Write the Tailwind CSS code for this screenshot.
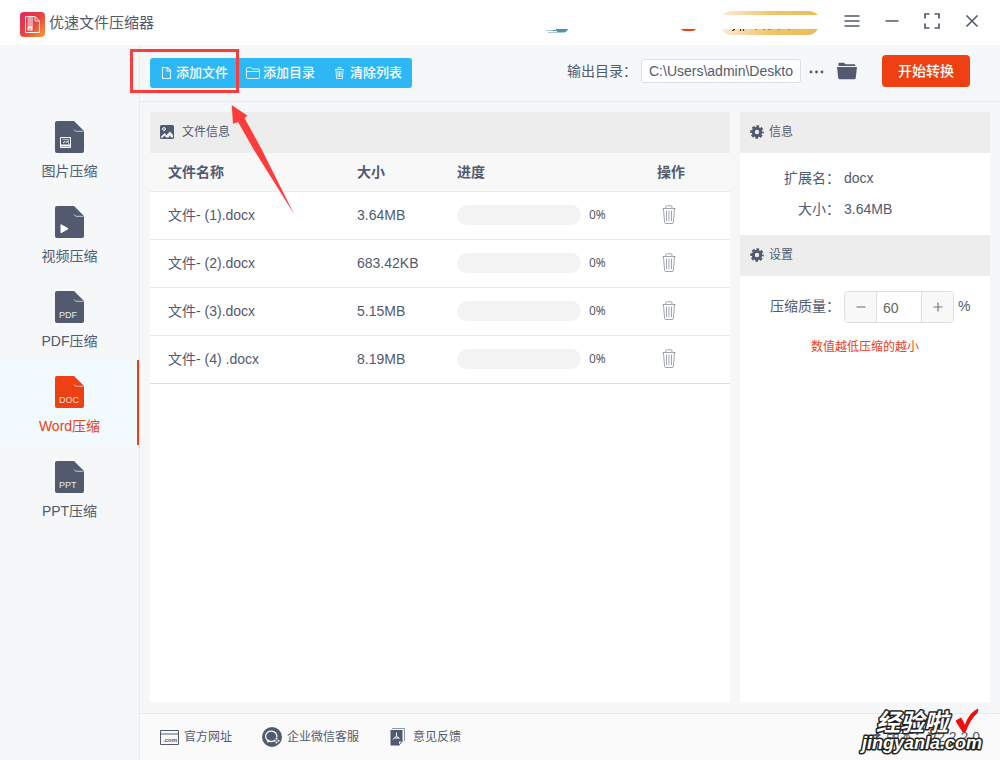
<!DOCTYPE html>
<html lang="zh-CN">
<head>
<meta charset="utf-8">
<meta name="viewport" content="width=device-width, initial-scale=1">
<title>优速文件压缩器</title>
<script src="https://cdn.jsdelivr.net/npm/@tailwindcss/browser@4"></script>
</head>
<body class="relative flex min-h-screen flex-col bg-[#f5f7f9] font-['Liberation_Sans','Noto_Sans_CJK_SC',sans-serif] text-sm text-[#515a6e]">
<svg class="hidden" aria-hidden="true">
  <symbol id="sheet" viewBox="0 0 29 32">
    <path d="M2 0H19L29 10V30Q29 32 27 32H2Q0 32 0 30V2Q0 0 2 0Z" fill="currentColor"/>
    <path d="M19 8.500Q20 10.300 21.500 10.300H28.500" fill="none" stroke="#fff" stroke-opacity=".75" stroke-width=".9"/>
  </symbol>
  <symbol id="bin" viewBox="0 0 14 20">
    <g fill="none" stroke="currentColor">
      <path d="M.5 3.500H13.500M4 3.500V2Q4 .7 5.300 .7H8.700Q10 .7 10 2V3.500"/>
      <path d="M1.500 4L2.600 17.200Q2.700 18.500 4 18.500H10Q11.300 18.500 11.400 17.200L12.500 4"/>
      <path d="M4.500 5.500V16M7 5.500V16M9.500 5.500V16"/>
    </g>
  </symbol>
  <symbol id="gear" viewBox="0 0 14 14">
    <g fill="none" stroke="currentColor">
      <circle cx="7" cy="7" r="3.700" stroke-width="3"/>
      <circle cx="7" cy="7" r="5.700" stroke-width="2.200" stroke-dasharray="2.700 1.777" stroke-dashoffset="1.350"/>
    </g>
  </symbol>
</svg>

<header class="relative flex h-[45px] shrink-0 items-center bg-[#fefefe] pl-5 pr-5">
  <svg class="mt-1 size-[25px]" viewBox="0 0 25 25" aria-hidden="true">
    <defs><linearGradient id="brand" x1="0" y1="0" x2="1" y2="1"><stop offset="0" stop-color="#e6265f"/><stop offset=".5" stop-color="#ea4040"/><stop offset="1" stop-color="#f5a03c"/></linearGradient></defs>
    <rect width="25" height="25" rx="4" fill="url(#brand)"/>
    <path d="M5.500 4.500H15L19.500 9V20.500H5.500ZM15 4.500V9H19.500" fill="none" stroke="#fff" stroke-opacity=".9"/>
    <path d="M7.500 6H13M7.500 8H13M7.500 10H13M7.500 12H13M7.500 14H13" stroke="#fff" stroke-width="1.200"/>
    <rect x="7.500" y="14.500" width="5" height="4" fill="#fff"/><path d="M9 17H11" stroke="#ea4a45"/>
  </svg>
  <h1 class="ml-1 text-[15px]">优速文件压缩器</h1>
  <svg class="absolute right-[180px] top-[11px] h-6 w-[276px]" viewBox="544 11 276 24" aria-hidden="true">
    <defs>
      <linearGradient id="gold"><stop offset="0" stop-color="#faecd2"/><stop offset=".5" stop-color="#f0c56c"/><stop offset="1" stop-color="#edbb5b"/></linearGradient>
    </defs>
    <path d="M546 30.500H555M548 32.500H565" stroke="#a9cdd0"/><path d="M556 29.500H568M553 30.500H567M557 31.500H566" stroke="#5297a0"/>
    <path d="M681 29H696Q695 31 692 31H685Q682 31 681 29Z" fill="#ee4013"/>
    <path d="M722.500 15Q726 11 732 11H808Q814 11 818 15ZM722 29H818Q814 35 808 35H732Q725 35 722 29Z" fill="url(#gold)"/>
    <path d="M733 29.500H735M740.500 29V31M743.500 29V31M732 30.500H734" stroke="#613a21" stroke-width="1.200"/>
    <path d="M755 29.500H757M763 29.500H765M768 29.500H771M778 29.500H780M788 29.500H790" stroke="#b98b42"/>
  </svg>
  <div class="ml-auto flex items-center gap-6 pb-1">
    <button aria-label="菜单"><svg class="size-4" viewBox="0 0 16 16"><path d="M.5 3H15.500M.5 8H15.500M.5 13H15.500" stroke="#515a6e" stroke-width="1.400"/></svg></button>
    <button aria-label="最小化"><svg class="size-4" viewBox="0 0 16 16"><path d="M1.500 8H14.500" stroke="#515a6e" stroke-width="1.500"/></svg></button>
    <button aria-label="最大化"><svg class="size-4" viewBox="0 0 16 16"><path d="M1 5.500V1H5.500M10.500 1H15V5.500M15 10.500V15H10.500M5.500 15H1V10.500" fill="none" stroke="#515a6e" stroke-width="1.700"/></svg></button>
    <button aria-label="关闭"><svg class="size-4" viewBox="0 0 16 16"><path d="M2.500 2.500L13.500 13.500M13.500 2.500L2.500 13.500" stroke="#515a6e" stroke-width="1.600"/></svg></button>
  </div>
</header>

<div class="flex flex-1">
  <nav class="w-[140px] shrink-0 border-r border-[#e8eaec] pt-[60px]">
    <a href="#image" class="flex h-[85px] flex-col items-center pt-4 leading-5">
      <svg class="mb-2 h-8 w-[29px]" viewBox="0 0 29 32"><use href="#sheet"/><path d="M5.500 16.500H15.500V26.500H5.500Z" fill="#515a6e" stroke="#fff"/><path d="M6 24.500H15" stroke="#fff" stroke-width="2"/><path d="M7.500 18.500H13.500V23.500" fill="none" stroke="#fff" stroke-opacity=".6"/><path d="M8 22L10 20.500L11 21.500L13 20" stroke="#fff" fill="none"/></svg>图片压缩</a>
    <a href="#video" class="flex h-[85px] flex-col items-center pt-4 leading-5">
      <svg class="mb-2 h-8 w-[29px]" viewBox="0 0 29 32"><use href="#sheet"/><path d="M5.500 19Q5.500 18 6.500 18.500L12.800 22Q13.500 22.700 12.800 23.300L6.500 26.900Q5.500 27.300 5.500 26.300Z" fill="#fff"/></svg>视频压缩</a>
    <a href="#pdf" class="flex h-[85px] flex-col items-center pt-4 leading-5">
      <svg class="mb-2 h-8 w-[29px]" viewBox="0 0 29 32"><use href="#sheet"/><text x="4" y="27" font-size="9" fill="#e8eaec" font-family="Liberation Sans">PDF</text></svg>PDF压缩</a>
    <a href="#word" aria-current="page" class="flex h-[85px] flex-col items-center border-r-2 border-[#ee4013] bg-[#f0faff] pl-[2px] pt-4 leading-5 text-[#ee4013]">
      <svg class="mb-2 h-8 w-[29px]" viewBox="0 0 29 32"><use href="#sheet"/><text x="4" y="27" font-size="9" fill="#fde3dc" font-family="Liberation Sans">DOC</text></svg>Word压缩</a>
    <a href="#ppt" class="flex h-[85px] flex-col items-center pt-4 leading-5">
      <svg class="mb-2 h-8 w-[29px]" viewBox="0 0 29 32"><use href="#sheet"/><text x="4" y="27" font-size="9" fill="#e8eaec" font-family="Liberation Sans">PPT</text></svg>PPT压缩</a>
  </nav>

  <div class="flex min-w-0 flex-1 flex-col">
    <div class="flex h-[57px] items-center border-b border-[#e8eaec] pl-[10px] pr-[30px]">
      <div class="flex h-[30px] overflow-hidden rounded-[3px] bg-[#2db7f5] text-[13px] font-medium text-white">
        <button class="flex items-center gap-px px-[9px]"><svg class="size-4" viewBox="0 0 16 16" fill="none" stroke="#fff" stroke-opacity=".85" stroke-width="1.100"><path d="M3.500 2.500H8.500L11.500 5.500V13.500H3.500ZM8 2.500V6H11.500"/></svg>添加文件</button>
        <button class="flex items-center gap-px px-[9px]"><svg class="size-4" viewBox="0 0 16 16" fill="none" stroke="#fff" stroke-opacity=".85"><path d="M.5 12.500V3.500Q.5 2.500 1.500 2.500H5L6.500 4H12.500Q13.500 4 13.500 5V12.500Q13.500 13.500 12.500 13.500H1.500Q.5 13.500 .5 12.500ZM.5 6.500H13.500"/></svg>添加目录</button>
        <button class="flex items-center gap-px pl-[9px] pr-[10px]"><svg class="size-4" viewBox="0 0 16 16" fill="none" stroke="#fff" stroke-opacity=".8"><path d="M2 4.500H11M5 4.500V2.500H8V4.500M3 5L3.500 13.500H9.500L10 5M5 6V12M6.500 6V12M8 6V12"/></svg>清除列表</button>
      </div>
      <label for="outdir" class="ml-auto pb-1">输出目录：</label>
      <input id="outdir" value="C:\Users\admin\Deskto" class="mb-1 ml-1 h-6 w-40 rounded-[3px] border border-[#dcdee2] bg-white px-[7px] text-sm text-[#515a6e]">
      <button aria-label="浏览" class="ml-2"><svg class="mb-1 size-4" viewBox="0 0 16 16" fill="#515a6e"><circle cx="2" cy="9" r="1.400"/><circle cx="7.500" cy="9" r="1.400"/><circle cx="13" cy="9" r="1.400"/></svg></button>
      <button aria-label="打开目录" class="ml-3"><svg class="mb-1 h-[18px] w-5" viewBox="0 0 20 18"><path d="M1.500 4V1.500Q1.500 .7 2.300 .7H7L8.500 2.300H17.500Q18.300 2.300 18.300 3V4Z" fill="#515a6e"/><path d="M0 5H20L18.700 16Q18.500 17.300 17.200 17.300H2.800Q1.500 17.300 1.300 16Z" fill="#515a6e"/></svg></button>
      <button class="mb-1 ml-[25px] h-8 w-[88px] rounded-[4px] bg-[#ee4013] text-sm font-medium text-white">开始转换</button>
    </div>

    <main class="flex flex-1 gap-[10px] px-[10px] pb-[11px] pt-[10px]">
      <section class="min-w-0 flex-1 bg-white">
        <h2 class="flex h-[41px] items-center gap-2 bg-[#ededed] pb-[2px] pl-[10px] text-xs">
          <svg class="size-[14px]" viewBox="0 0 14 14"><rect width="14" height="14" rx="1.500" fill="#515a6e"/><path d="M1 11.500L4.500 8L6.500 10L10 6.500L13 10V12.500H11L10 10.500L8.500 12.500H6L4.500 10.500L2.500 12.800H1Z" fill="#ededed"/><circle cx="4" cy="4" r="1.400" fill="none" stroke="#fff"/></svg>文件信息</h2>
        <table class="w-full table-fixed border-collapse text-left">
          <colgroup><col><col class="w-[100px]"><col class="w-[200px]"><col class="w-[91px]"></colgroup>
          <thead class="bg-[#f8f8f9]"><tr class="h-[38px] border-b border-[#e8eaec] [&>th]:pl-[18px]"><th>文件名称</th><th>大小</th><th>进度</th><th>操作</th></tr></thead>
          <tbody id="files"></tbody>
        </table>
      </section>

      <aside class="w-[250px] shrink-0 bg-white">
        <h2 class="flex h-[41px] items-center gap-[5px] bg-[#ededed] pb-[2px] pl-[10px] text-xs"><svg class="size-[14px]"><use href="#gear"/></svg>信息</h2>
        <dl class="grid grid-cols-[100px_1fr] gap-x-1 py-[10px] leading-[31px]">
          <dt class="text-right">扩展名：</dt><dd>docx</dd>
          <dt class="text-right">大小：</dt><dd>3.64MB</dd>
        </dl>
        <h2 class="flex h-[41px] items-center gap-[5px] bg-[#ededed] pb-[2px] pl-[10px] text-xs"><svg class="size-[14px]"><use href="#gear"/></svg>设置</h2>
        <div class="flex items-center pt-[15px]">
          <label for="quality" class="w-[100px] pb-[2px] text-right">压缩质量：</label>
          <div class="ml-1 flex h-8 w-[110px] overflow-hidden rounded-[4px] border border-[#dcdee2]">
            <button aria-label="减少" class="flex w-[31px] items-center justify-center bg-[#f8f8f9]"><svg class="size-[10px]" viewBox="0 0 10 10"><path d="M.5 5H9.500" stroke="#9299a5" stroke-width="1.500"/></svg></button>
            <input id="quality" value="60" class="min-w-0 flex-1 border-x border-[#dcdee2] px-[6px] pt-[2px] text-sm text-[#666]">
            <button aria-label="增加" class="flex w-[31px] items-center justify-center bg-[#f8f8f9]"><svg class="size-[10px]" viewBox="0 0 10 10"><path d="M.5 5H9.500M5 .5V9.500" stroke="#717987" stroke-width="1.200"/></svg></button>
          </div>
          <span class="ml-1 pb-[2px]">%</span>
        </div>
        <p class="mt-4 text-center text-xs text-[#ee4013]">数值越低压缩的越小</p>
      </aside>
    </main>

    <footer class="relative flex h-[47px] items-center border-t border-[#e8eaec] bg-[#fafafa] pl-5 text-xs">
      <a href="#site" class="flex items-center gap-[5px]"><svg class="h-4 w-[19px]" viewBox="0 0 19 16"><path d="M.5 1.500H18.500V15.500H.5ZM.5 5H18.500" fill="none" stroke="#515a6e"/><text x="3" y="13" font-size="6" font-weight="bold" fill="#515a6e" font-family="Liberation Sans">.com</text></svg>官方网址</a>
      <a href="#service" class="ml-[30px] flex items-center gap-[5px]"><svg class="size-5" viewBox="0 0 20 20"><circle cx="10" cy="10" r="10" fill="#515a6e"/><path d="M14.800 10.500A5.700 5.200 0 1 0 9.500 14.500L12 14.200" fill="none" stroke="#fff" stroke-width="1.300"/><path d="M6 12.500L5 15.800L8.500 14.500Z" fill="#fff"/><g fill="#fff"><circle cx="14.500" cy="11.800" r="1"/><circle cx="16.500" cy="13.700" r="1"/><circle cx="14.500" cy="15.500" r="1"/><circle cx="12.700" cy="13.700" r="1"/></g></svg>企业微信客服</a>
      <a href="#feedback" class="ml-[31px] flex items-center gap-2"><svg class="h-[18px] w-[15px]" viewBox="0 0 15 18"><path d="M2 .5H14.500V13" fill="none" stroke="#9299a5"/><path d="M.5 2H12.500V13L8.500 17.500H.5Z" fill="#515a6e"/><path d="M12.500 13H8.500V17.500Z" fill="#fafafa" stroke="#515a6e"/><path d="M6.500 4.500V8L9.500 10.500M6.500 8L3 11.500M4.500 10H9" fill="none" stroke="#fff"/></svg>意见反馈</a>
      <span class="ml-auto flex items-center gap-1 pr-5 text-sm"><svg class="size-[14px]" viewBox="0 0 14 14"><path d="M1 9Q3 4 8 4V1L13 5L8 9V6Q4 6 1 9Z" fill="#515a6e"/></svg>版本：V2.2.2.0</span>
      <svg class="absolute bottom-0 right-[5px] h-[60px] w-[140px]" viewBox="855 700 140 60" role="img" aria-label="经验啦 jingyanla.com">
        <g font-weight="bold" font-style="italic" fill="#fff" stroke="#222" stroke-width="3" stroke-linejoin="round" paint-order="stroke">
          <text x="876" y="731" font-size="24" font-family="Noto Sans CJK SC">经验啦</text>
          <text x="862" y="749" font-size="18" font-family="Liberation Sans">jingyanla.com</text>
        </g>
        <path d="M956 721L961 718L965 726Q969 713 978 709L977 713Q970 719 965 732H963Z" fill="#f50a0a" stroke="#f50a0a"/>
      </svg>
    </footer>
  </div>
</div>

<svg class="pointer-events-none absolute left-[130px] top-[45px] h-[180px] w-[170px]" viewBox="130 45 170 180" aria-hidden="true">
  <rect x="131.500" y="50.500" width="106" height="41" fill="none" stroke="#fd3c3c" stroke-width="3"/>
  <path d="M231.700 105L247.500 115.700L244.500 118L262 150L294 214L254 150L238 122L233 123.700Z" fill="#fd3c3c"/>
</svg>

<script>
const files = [
  ['文件- (1).docx', '3.64MB', 0],
  ['文件- (2).docx', '683.42KB', 0],
  ['文件- (3).docx', '5.15MB', 0],
  ['文件- (4) .docx', '8.19MB', 0]
];
document.getElementById('files').innerHTML = files.map(([name, size, done]) => `
  <tr class="h-12 border-b border-[#e8eaec] last:border-[#dcdee2] [&>td]:pl-[18px]">
    <td>${name}</td><td>${size}</td>
    <td><div class="flex items-center gap-2"><div class="h-5 w-[124px] overflow-hidden rounded-full bg-[#f3f3f3]"><div class="h-full bg-[#2db7f5]" style="width:${done}%"></div></div><span class="font-['Noto_Sans'] text-xs">${done}%</span></div></td>
    <td><button aria-label="删除 ${name}" class="ml-[5px] block text-[#9fa5b0]"><svg class="h-5 w-[14px]"><use href="#bin"/></svg></button></td>
  </tr>`).join('');
</script>
</body>
</html>
